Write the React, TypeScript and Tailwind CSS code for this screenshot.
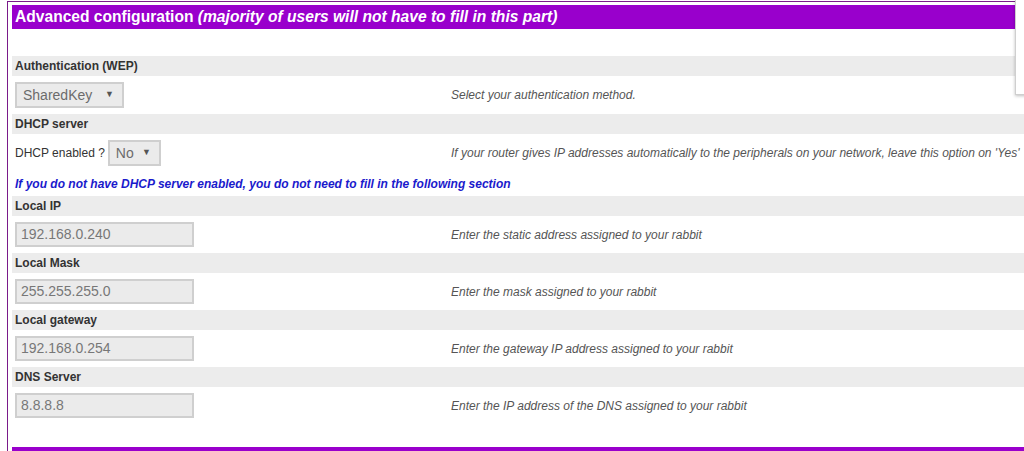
import React from "react";

const font = { fontFamily: '"Liberation Sans", Arial, sans-serif' };

function Bar({ label }: { label: string }) {
  return (
    <div className="h-[20px] bg-[#ececec] pl-[3px] flex items-center text-[12px] font-bold text-[#333]">
      {label}
    </div>
  );
}

function Select({ value, width }: { value: string; width: string }) {
  return (
    <div
      className={`${width} h-[26px] border-2 border-[#cfcfcf] bg-[#ebebeb] flex items-center justify-between pl-[6px] pr-[8px] text-[14px] text-[#6b6b6b]`}
    >
      <span>{value}</span>
      <span className="text-[9px] text-[#555]">▼</span>
    </div>
  );
}

function Field({ value }: { value: string }) {
  return (
    <div className="w-[179px] h-[25px] border-2 border-[#cfcfcf] bg-[#ebebeb] flex items-center pl-[4px] text-[14px] text-[#777]">
      {value}
    </div>
  );
}

function Row({ left, hint }: { left: React.ReactNode; hint: string }) {
  return (
    <div className="flex items-center py-[6px]">
      <div className="w-[439px] pl-[3px] flex items-center">{left}</div>
      <div className="text-[12px] italic text-[#555] whitespace-nowrap">{hint}</div>
    </div>
  );
}

const fields = [
  { label: "Local IP", value: "192.168.0.240", hint: "Enter the static address assigned to your rabbit" },
  { label: "Local Mask", value: "255.255.255.0", hint: "Enter the mask assigned to your rabbit" },
  { label: "Local gateway", value: "192.168.0.254", hint: "Enter the gateway IP address assigned to your rabbit" },
  { label: "DNS Server", value: "8.8.8.8", hint: "Enter the IP address of the DNS assigned to your rabbit" },
];

export default function App() {
  return (
    <div className="relative w-[1024px] h-[451px] overflow-hidden bg-white" style={font}>
      <div className="ml-[7px] mt-[1px] border-l border-t border-[#7a1a8a] pl-[4px] pt-[3px] w-[1100px] h-[460px]">
        {/* header */}
        <div className="h-[24px] bg-[#9900cc] flex items-center pl-[3px] text-[15.6px] font-bold text-white whitespace-nowrap">
          Advanced configuration&nbsp;<i>(majority of users will not have to fill in this part)</i>
        </div>

        <div className="h-[27px]" />

        <Bar label="Authentication (WEP)" />
        <Row left={<Select value="SharedKey" width="w-[109px]" />} hint="Select your authentication method." />

        <Bar label="DHCP server" />
        <Row
          left={
            <>
              <span className="text-[12px] text-[#333] mr-[3px]">DHCP enabled ?</span>
              <Select value="No" width="w-[53px]" />
            </>
          }
          hint="If your router gives IP addresses automatically to the peripherals on your network, leave this option on 'Yes'"
        />

        <div className="h-[24px] flex items-center pl-[3px] text-[12px] font-bold italic text-[#1a1acc]">
          If you do not have DHCP server enabled, you do not need to fill in the following section
        </div>

        {fields.map((f) => (
          <div key={f.label}>
            <Bar label={f.label} />
            <Row left={<Field value={f.value} />} hint={f.hint} />
          </div>
        ))}

        <div className="h-[23px]" />
        <div className="h-[24px] bg-[#9900cc]" />
      </div>

      {/* clipped popup at the right edge */}
      <div className="absolute top-0 left-[1015px] w-[20px] h-[95px] bg-white border-l border-b border-[#cfcfcf] shadow-[0_1px_3px_rgba(0,0,0,0.25)]" />
    </div>
  );
}
